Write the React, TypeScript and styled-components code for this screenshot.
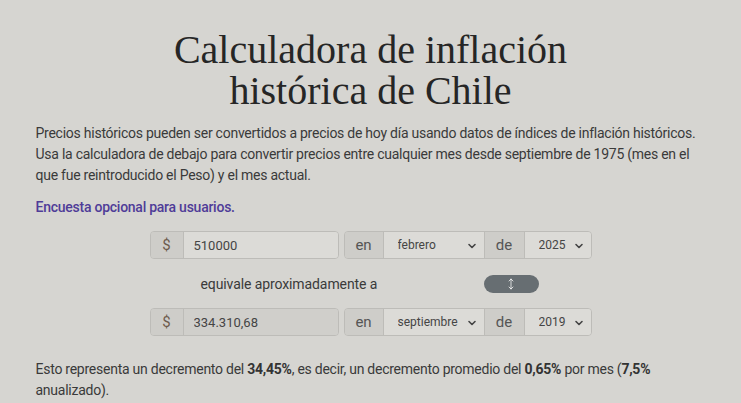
import styled, { createGlobalStyle } from "styled-components";
import { ChevronDown, MoveVertical } from "lucide-react";

const GlobalStyle = createGlobalStyle`
  *, *::before, *::after {
    box-sizing: border-box;
  }
  body {
    margin: 0;
    background: #d6d5d1;
    font-family: Roboto, "Noto Sans", sans-serif;
    color: #333;
  }
`;

const Page = styled.main`
  width: 670px;
  margin: 0 auto;
  padding-top: 29px;
`;

const Title = styled.h1`
  margin: 0 0 12px;
  text-align: center;
  font-family: "Liberation Serif", serif;
  font-weight: 400;
  font-size: 40px;
  line-height: 41px;
  color: #262626;
`;

const Text = styled.p`
  margin: 0 0 11px;
  font-size: 14px;
  line-height: 21px;
  letter-spacing: -0.25px;
  color: #3a3a3a;
`;

const SurveyLink = styled.a`
  display: block;
  margin-bottom: 13px;
  font-size: 14px;
  line-height: 21px;
  font-weight: 500;
  letter-spacing: -0.25px;
  color: #4f3c98;
  text-decoration: none;
`;

const Calculator = styled.div`
  display: grid;
  grid-template-columns: 189px 248px;
  column-gap: 5px;
  justify-content: center;
`;

const Group = styled.div`
  display: flex;
  height: 28px;
  border: 1px solid #bdbcb8;
  border-radius: 4px;
  overflow: hidden;
`;

const Addon = styled.span<{ $width: number }>`
  flex: 0 0 ${({ $width }) => $width}px;
  display: flex;
  align-items: center;
  justify-content: center;
  background: #cecdc9;
  border-right: 1px solid #bdbcb8;
  border-left: 1px solid #bdbcb8;
  font-size: 15px;
  color: #555;
  &:first-child {
    border-left: none;
  }
`;

const Dollar = styled(Addon)`
  color: #6e5c4e;
`;

const Amount = styled.input<{ $readOnly?: boolean }>`
  flex: 1;
  min-width: 0;
  border: none;
  outline: none;
  padding: 0 0 0 10px;
  font-family: inherit;
  font-size: 13px;
  color: #454545;
  background: ${({ $readOnly }) => ($readOnly ? "#d0cfcb" : "#dcdbd7")};
`;

const SelectWrap = styled.div<{ $width?: number }>`
  position: relative;
  flex: ${({ $width }) => ($width ? `0 0 ${$width}px` : "1")};
  background: #dcdbd7;
`;

const Select = styled.select`
  appearance: none;
  width: 100%;
  height: 100%;
  border: none;
  outline: none;
  background: transparent;
  padding: 0 0 0 14px;
  font-family: inherit;
  font-size: 12px;
  color: #454545;
`;

const Chevron = styled(ChevronDown)`
  position: absolute;
  right: 6px;
  top: 8px;
  pointer-events: none;
  color: #444;
`;

const Middle = styled.div`
  grid-column: 1 / 3;
  display: flex;
  align-items: center;
  height: 49px;
`;

const Equivale = styled.span`
  margin-left: 51px;
  font-size: 14px;
  letter-spacing: -0.1px;
  color: #3a3a3a;
`;

const SwapButton = styled.button`
  margin-left: auto;
  margin-right: 53px;
  width: 55px;
  height: 18px;
  border: none;
  border-radius: 9px;
  background: #676e72;
  color: #fff;
  display: flex;
  align-items: center;
  justify-content: center;
  padding: 0;
`;

const Result = styled(Text)`
  margin-top: 23px;
  b {
    font-weight: 700;
    color: #333;
  }
`;

const months = [
  "enero", "febrero", "marzo", "abril", "mayo", "junio", "julio",
  "agosto", "septiembre", "octubre", "noviembre", "diciembre",
];

const years = Array.from({ length: 51 }, (_, i) => String(2025 - i));

const PeriodPicker = ({ month, year }: { month: string; year: string }) => (
  <Group>
    <Addon $width={39}>en</Addon>
    <SelectWrap $width={100}>
      <Select defaultValue={month}>
        {months.map((m) => (
          <option key={m}>{m}</option>
        ))}
      </Select>
      <Chevron size={12} strokeWidth={3.2} />
    </SelectWrap>
    <Addon $width={41}>de</Addon>
    <SelectWrap>
      <Select defaultValue={year}>
        {years.map((y) => (
          <option key={y}>{y}</option>
        ))}
      </Select>
      <Chevron size={12} strokeWidth={3.2} />
    </SelectWrap>
  </Group>
);

export default function App() {
  return (
    <>
      <GlobalStyle />
      <Page>
        <Title>
          Calculadora de inflación
          <br />
          histórica de Chile
        </Title>
        <Text>
          Precios históricos pueden ser convertidos a precios de hoy día usando
          datos de índices de inflación históricos. Usa la calculadora de
          debajo para convertir precios entre cualquier mes desde septiembre de
          1975 (mes en el que fue reintroducido el Peso) y el mes actual.
        </Text>
        <SurveyLink href="#">Encuesta opcional para usuarios.</SurveyLink>
        <Calculator>
          <Group>
            <Dollar $width={33}>$</Dollar>
            <Amount defaultValue="510000" />
          </Group>
          <PeriodPicker month="febrero" year="2025" />
          <Middle>
            <Equivale>equivale aproximadamente a</Equivale>
            <SwapButton aria-label="Intercambiar">
              <MoveVertical size={12} strokeWidth={1.5} />
            </SwapButton>
          </Middle>
          <Group>
            <Dollar $width={33}>$</Dollar>
            <Amount $readOnly readOnly defaultValue="334.310,68" />
          </Group>
          <PeriodPicker month="septiembre" year="2019" />
        </Calculator>
        <Result>
          Esto representa un decremento del <b>34,45%</b>, es decir, un
          decremento promedio del <b>0,65%</b> por mes (<b>7,5%</b>{" "}
          anualizado).
        </Result>
      </Page>
    </>
  );
}
